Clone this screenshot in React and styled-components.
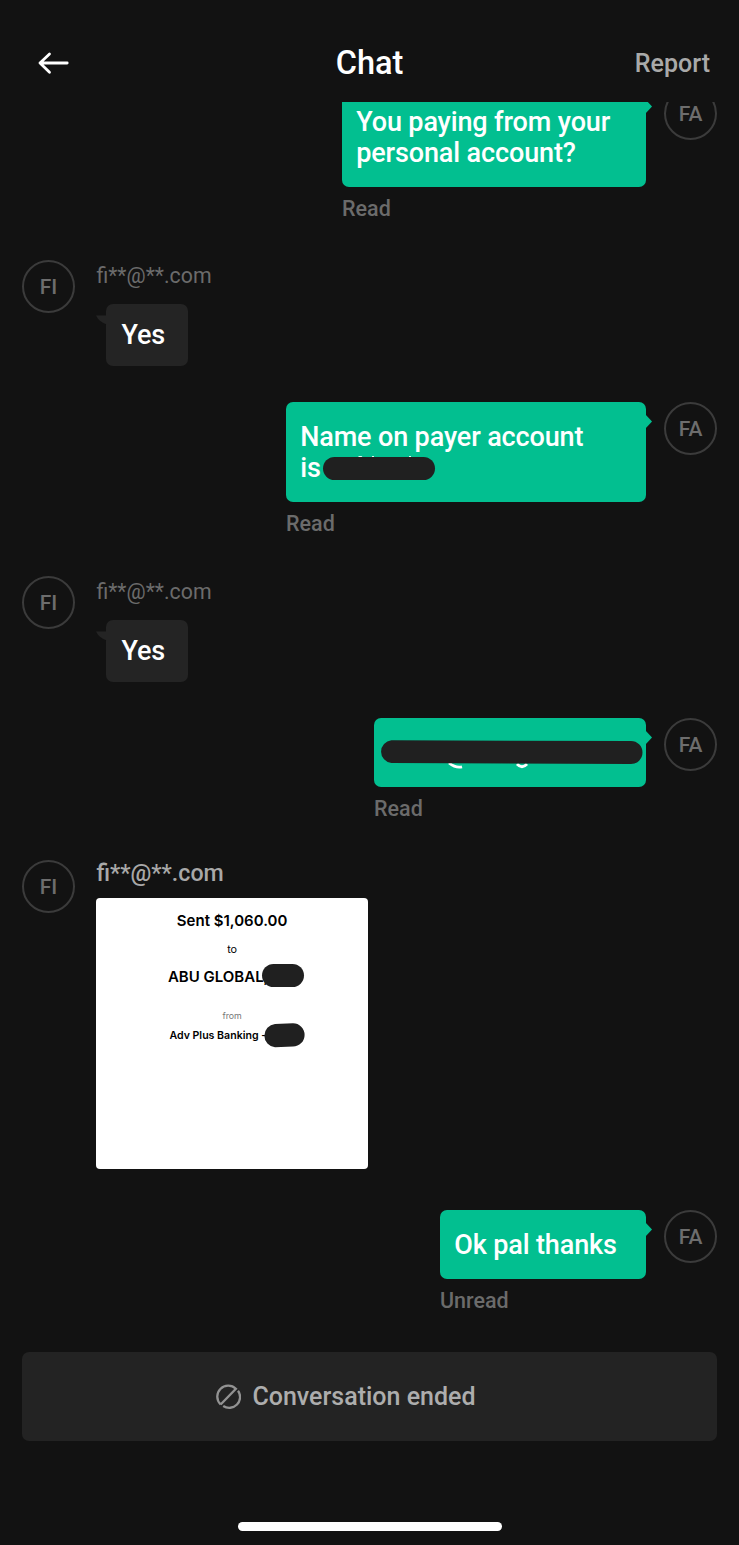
import React from "react";
import styled, { createGlobalStyle } from "styled-components";

const GlobalStyle = createGlobalStyle`
  * { box-sizing: border-box; }
  body { margin: 0; background: #121212; }
`;

const Screen = styled.main`
  display: flex;
  flex-direction: column;
  width: 739px;
  height: 1545px;
  overflow: hidden;
  background: #121212;
  font-family: Roboto, "Liberation Sans", sans-serif;
  font-weight: 500;
  color: #fff;
`;

const Header = styled.header`
  flex: none;
  height: 102px;
  padding: 24px 29px 0 38px;
  display: grid;
  grid-template-columns: 1fr auto 1fr;
  align-items: center;
`;

const BackButton = styled.button`
  display: flex;
  width: 32px;
  padding: 0;
  border: 0;
  background: none;
  color: #fff;
`;

const Title = styled.h1`
  margin: 0 9px 1px 0;
  font-size: 32.5px;
  line-height: 38px;
  font-weight: 500;
`;

const Report = styled.button`
  justify-self: end;
  padding: 2px 0 0;
  border: 0;
  background: none;
  font: inherit;
  font-size: 25px;
  line-height: 30px;
  color: #a9a9a9;
`;

const Conversation = styled.section`
  flex: none;
  height: 1250px;
  overflow: hidden;
`;

const MessageList = styled.div`
  display: flex;
  flex-direction: column;
  margin-top: -15px;
  padding: 0 22px;
`;

const Row = styled.article`
  display: flex;
  flex: none;
  flex-direction: ${(p) => (p.$own ? "row-reverse" : "row")};
  align-items: flex-start;
  height: ${(p) => p.$height}px;
`;

const Avatar = styled.div`
  flex: none;
  width: 53px;
  height: 53px;
  padding-top: 1px;
  border: 2px solid #3b3b3b;
  border-radius: 50%;
  display: grid;
  place-items: center;
  font-size: 21px;
  line-height: 25px;
  color: #6d6d6d;
`;

const Body = styled.div`
  display: flex;
  flex-direction: column;
  align-items: flex-start;
  margin: ${(p) => (p.$own ? "0 18px 0 0" : "0 0 0 21.4px")};
`;

const Bubble = styled.div`
  position: relative;
  width: ${(p) => p.$width}px;
  min-height: 62px;
  margin-left: ${(p) => (p.$own ? 0 : 10)}px;
  padding: ${(p) => (p.$own ? "20px 14.2px 18px" : "16px 15px 15px")};
  border-radius: 7px;
  background: ${(p) => (p.$own ? "#02bf90" : "#242424")};
  font-size: 27px;
  line-height: 31px;
  letter-spacing: -0.13px;
  white-space: nowrap;
`;

const OwnTail = styled.svg`
  position: absolute;
  left: 100%;
  top: 12px;
  margin-left: -1px;
`;

const PeerTail = styled.svg`
  position: absolute;
  right: 100%;
  top: 11px;
  margin-right: -1px;
`;

const Line = styled.div`
  height: 31px;
`;

const Status = styled.div`
  padding-top: 1px;
  font-size: 21.5px;
  line-height: 42px;
  color: #6b6b6b;
`;

const Sender = styled.div`
  height: ${(p) => (p.$bright ? 38 : 44)}px;
  padding-top: ${(p) => (p.$bright ? 0 : 3)}px;
  font-size: ${(p) => (p.$bright ? 23.2 : 21.3)}px;
  font-weight: ${(p) => (p.$bright ? 500 : 400)};
  line-height: 26px;
  color: ${(p) => (p.$bright ? "#a8a8a8" : "#6b6b6b")};
`;

const Cover = styled.svg`
  position: absolute;
  left: ${(p) => p.$x}px;
  top: ${(p) => p.$y}px;
  overflow: visible;
`;

const Receipt = styled.div`
  position: relative;
  width: 271.4px;
  height: 271px;
  padding-top: 13px;
  border-radius: 4px;
  background: #fff;
  color: #000;
  font-family: Inter, sans-serif;
  text-align: center;
`;

const ReceiptLine = styled.div`
  height: ${(p) => p.$height}px;
  padding-left: ${(p) => p.$indent || 0}px;
  text-align: ${(p) => (p.$indent ? "left" : "center")};
  font-size: ${(p) => p.$size}px;
  font-weight: ${(p) => p.$weight || 600};
  line-height: 19px;
  color: ${(p) => p.$color || "#000"};
`;

const EndedNotice = styled.div`
  flex: none;
  height: 89px;
  margin: 0 22px;
  padding-right: 47px;
  border-radius: 7px;
  background: #232323;
  display: flex;
  align-items: center;
  justify-content: center;
  gap: 11px;
  font-size: 25px;
  line-height: 30px;
  color: #adadad;
`;

const EndedIcon = styled.svg`
  margin-bottom: 1px;
`;

const HomeIndicator = styled.div`
  flex: none;
  width: 264px;
  height: 9px;
  margin: 81px 0 0 237.5px;
  border-radius: 5px;
  background: #fff;
`;

function Own({ width, height, status = "Read", children }) {
  return (
    <Row $own $height={height}>
      <Avatar>FA</Avatar>
      <Body $own>
        <Bubble $own $width={width}>
          {children}
          <OwnTail width="8" height="15" viewBox="0 0 8 15">
            <path d="M0 0L7 7.5L0 15Z" fill="#02bf90" />
          </OwnTail>
        </Bubble>
        <Status>{status}</Status>
      </Body>
    </Row>
  );
}

function Peer({ height, bright, children }) {
  return (
    <Row $height={height}>
      <Avatar>FI</Avatar>
      <Body>
        <Sender $bright={bright}>fi**@**.com</Sender>
        {children}
      </Body>
    </Row>
  );
}

function Yes() {
  return (
    <Bubble $width={82}>
      Yes
      <PeerTail width="11" height="10" viewBox="0 0 11 10">
        <path d="M0 0.5H11V9.5Q3 7 0 0.5Z" fill="#242424" />
      </PeerTail>
    </Bubble>
  );
}

export default function App() {
  return (
    <Screen>
      <GlobalStyle />
      <Header>
        <BackButton aria-label="Back">
          <svg width="32" height="24" viewBox="0 0 32 24" fill="none" stroke="#fff" strokeWidth="2.8" strokeLinecap="round" strokeLinejoin="round">
            <path d="M11.5 3L2 12L11.5 21.2M2 12H29.2" />
          </svg>
        </BackButton>
        <Title>Chat</Title>
        <Report>Report</Report>
      </Header>
      <Conversation>
        <MessageList>
          <Own width={304} height={173}>
            <Line>You paying from your</Line>
            <Line>personal account?</Line>
          </Own>
          <Peer height={142}><Yes /></Peer>
          <Own width={360} height={174}>
            <Line>Name on payer account</Line>
            <Line>is</Line>
            <Cover $x={37} $y={54} width="113" height="24">
              <path d="M34.5 1.5L36 0H38.5L40 1.5ZM49 1.5V0H51V1.5ZM86 1.5V0H88V1.5Z" fill="#d8fff3" />
              <rect y="1" width="112" height="23" rx="11.5" fill="#202020" />
            </Cover>
          </Own>
          <Peer height={142}><Yes /></Peer>
          <Own width={272} height={142}>
            <Line />
            <Cover $x={5} $y={22} width="264" height="30">
              <path d="M70 23Q77 28.5 83 26.8M138 24Q143 29.5 148 24" fill="none" stroke="#fff" strokeWidth="2.8" />
              <path d="M12.4 0.3L252 1A11.5 11.5 0 0 1 252 24L12.4 23A11.4 11.4 0 0 1 12.4 0.3Z" fill="#202020" />
            </Cover>
          </Own>
          <Peer height={350} bright>
            <Receipt>
              <ReceiptLine $height={28.5} $size={15}>Sent $1,060.00</ReceiptLine>
              <ReceiptLine $height={27.5} $size={10.8} $weight={400}>to</ReceiptLine>
              <ReceiptLine $height={39} $size={15} $indent={71.5}>ABU GLOBAL,</ReceiptLine>
              <ReceiptLine $height={19.5} $size={8.8} $weight={400} $color="#777">from</ReceiptLine>
              <ReceiptLine $height={20} $size={10.6} $indent={73}>Adv Plus Banking -</ReceiptLine>
              <Cover $x={166} $y={66} width="43" height="23">
                <rect width="42" height="23" rx="11.5" fill="#202020" />
              </Cover>
              <Cover $x={166.6} $y={125} width="42" height="25">
                <path d="M12 1L30 0.3A11.5 11.5 0 0 1 30 23.5L12 24.3A11.7 11.7 0 0 1 12 1Z" fill="#202020" />
              </Cover>
            </Receipt>
          </Peer>
          <Own width={206} height={142} status="Unread">
            <Line>Ok pal thanks</Line>
          </Own>
        </MessageList>
      </Conversation>
      <EndedNotice>
        <EndedIcon width="25" height="25" viewBox="0 0 26 26" fill="none" stroke="#929292" strokeWidth="2.4">
          <path d="M4.8 21.3A11.2 11.2 0 0 1 20.7 4.9L4.8 21.3M22.9 7A11.2 11.2 0 0 1 7.5 22.8" />
        </EndedIcon>
        Conversation ended
      </EndedNotice>
      <HomeIndicator />
    </Screen>
  );
}
